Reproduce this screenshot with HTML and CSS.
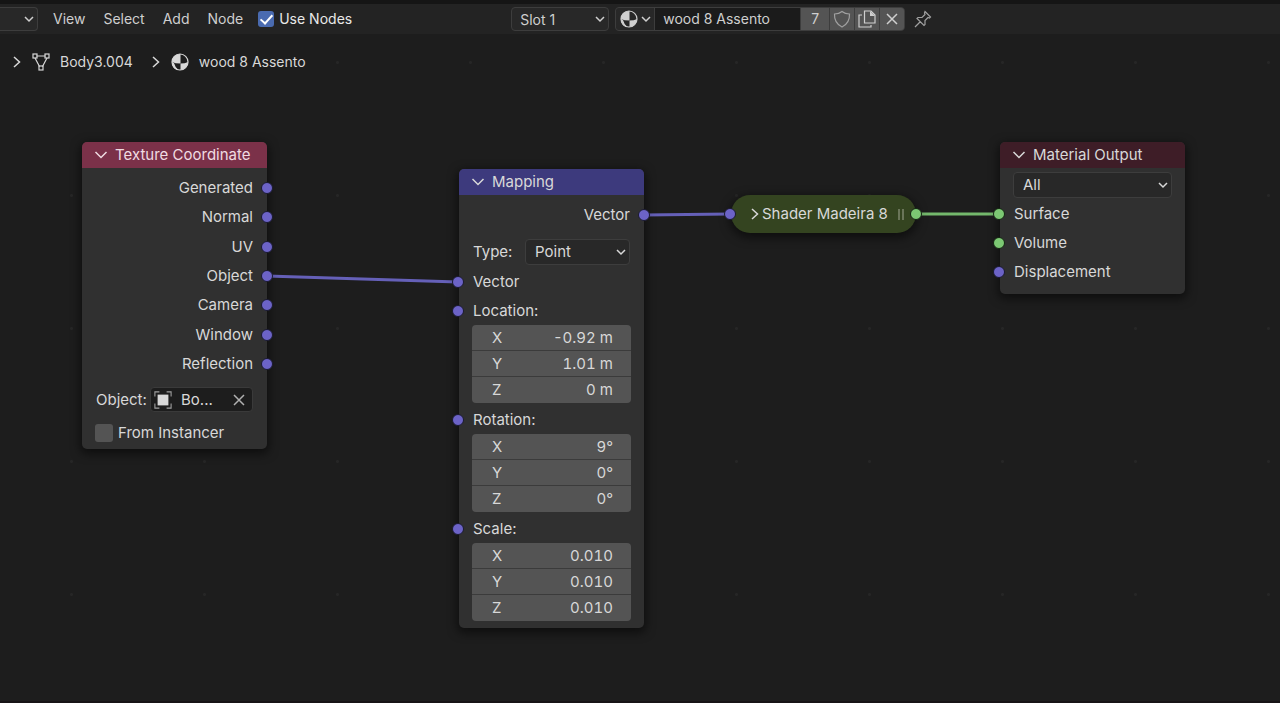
FILE: index.html
```html
<!DOCTYPE html>
<html lang="en">
<head>
  <meta charset="UTF-8">
  <meta name="viewport" content="width=device-width, initial-scale=1.0">
  <title>Shader Editor</title>
  <link rel="stylesheet" href="styles.css">
</head>
<body>
  <svg class="icon-defs" aria-hidden="true">
    <symbol id="icon-down" viewBox="0 0 10 10"><path d="M1 3l4 4 4-4"/></symbol>
    <symbol id="icon-collapse" viewBox="0 0 14 14"><path d="M1.500 4l5.500 5.500L12.500 4"/></symbol>
    <symbol id="icon-right" viewBox="0 0 14 14"><path d="M4 2l5.500 5L4 12"/></symbol>
    <symbol id="icon-close" viewBox="0 0 14 14"><path d="M2 2l10 10M12 2L2 12"/></symbol>
    <symbol id="icon-material" viewBox="0 0 18 18">
      <circle cx="9" cy="9" r="8"/>
      <path class="solid" d="M9.500 1A8 8 0 0 0 1 9q3 1.500 8.500 1.500z"/>
      <path class="solid" d="M9.500 10.500Q14 10.500 17 9a8 8 0 0 1-7.500 8z"/>
      <path class="solid" d="M1 9l2 1q1 4 4 6.500L6 17A8 8 0 0 1 1 9z"/>
    </symbol>
  </svg>

  <header class="toolbar">
    <div class="dropdown type-dropdown">
      <select aria-label="Shader type"><option></option></select>
      <svg class="arrow"><use href="#icon-down"/></svg>
    </div>
    <nav class="menu">
      <button type="button">View</button>
      <button type="button">Select</button>
      <button type="button">Add</button>
      <button type="button">Node</button>
    </nav>
    <label class="use-nodes"><input type="checkbox" class="checkbox" checked> Use Nodes</label>

    <div class="dropdown slot-dropdown">
      <select aria-label="Slot"><option>Slot 1</option></select>
      <svg class="arrow"><use href="#icon-down"/></svg>
    </div>

    <div class="datablock">
      <button type="button" class="browse" aria-label="Browse material">
        <svg class="icon material"><use href="#icon-material"/></svg>
        <svg class="arrow-small"><use href="#icon-down"/></svg>
      </button>
      <input type="text" class="name" aria-label="Material name" value="wood 8 Assento">
      <button type="button" class="tool users">7</button>
      <button type="button" class="tool" aria-label="Fake user">
        <svg class="icon dim" viewBox="0 0 18 18"><path d="M9 1.500Q12 4 16.500 4q.5 9-7.500 13Q1 13 1.500 4 6 4 9 1.500z"/></svg>
      </button>
      <button type="button" class="tool" aria-label="New material">
        <svg class="icon" viewBox="0 0 18 18"><path d="M6.500 1h6.500l4 4v8H6.500z"/><path class="solid" d="M12 1l5 5h-5z"/><path d="M4 5H1v12h12v-2"/></svg>
      </button>
      <button type="button" class="tool" aria-label="Unlink">
        <svg class="icon-mid"><use href="#icon-close"/></svg>
      </button>
    </div>
    <button type="button" class="pin" aria-label="Pin">
      <svg class="icon dim" viewBox="0 0 18 18"><path d="M11 1.500l5.500 5.500-1 1-1.500-.5-3 3v4l-1 1-7-7 1-1h4l3-3-.5-1.500zM6.500 11.500L1 17"/></svg>
    </button>
  </header>

  <main class="editor">
    <nav class="breadcrumb">
      <svg class="icon-mid"><use href="#icon-right"/></svg>
      <svg class="icon mesh" viewBox="0 0 18 18"><path d="M4.500 3h9M3 5l4.500 8.500M15 5l-4.500 8.500"/><rect x="1" y="1" width="4" height="4"/><rect x="13" y="1" width="4" height="4"/><rect x="7" y="13" width="4" height="4"/></svg>
      <span>Body3.004</span>
      <svg class="icon-mid next"><use href="#icon-right"/></svg>
      <svg class="icon material"><use href="#icon-material"/></svg>
      <span>wood 8 Assento</span>
    </nav>

    <svg class="links" aria-hidden="true">
      <path d="M267 242L458 248"/>
      <path d="M644 181L730 180"/>
      <path class="green" d="M916 180H1000"/>
    </svg>

    <section class="node texture-node">
      <h2 class="node-header"><svg class="icon-mid"><use href="#icon-collapse"/></svg>Texture Coordinate</h2>
      <ul class="sockets outputs">
        <li>Generated<i class="socket out"></i></li>
        <li>Normal<i class="socket out"></i></li>
        <li>UV<i class="socket out"></i></li>
        <li>Object<i class="socket out"></i></li>
        <li>Camera<i class="socket out"></i></li>
        <li>Window<i class="socket out"></i></li>
        <li>Reflection<i class="socket out"></i></li>
      </ul>
      <div class="object-row">
        <label for="object">Object:</label>
        <div class="object-field">
          <svg class="icon" viewBox="0 0 20 20"><path class="dim" d="M1 6V1h5M14 1h5v5M19 14v5h-5M6 19H1v-5"/><rect class="solid" x="4" y="4" width="12" height="12"/></svg>
          <input type="text" id="object" value="Bo...">
          <button type="button" aria-label="Clear object"><svg class="icon-mid"><use href="#icon-close"/></svg></button>
        </div>
      </div>
      <label class="instancer"><input type="checkbox" class="checkbox"> From Instancer</label>
    </section>

    <section class="node mapping-node">
      <h2 class="node-header"><svg class="icon-mid"><use href="#icon-collapse"/></svg>Mapping</h2>
      <div class="row output">Vector<i class="socket out"></i></div>
      <div class="type-row">
        <label for="type">Type:</label>
        <div class="dropdown">
          <select id="type"><option>Point</option></select>
          <svg class="arrow"><use href="#icon-down"/></svg>
        </div>
      </div>
      <div class="row">Vector<i class="socket in"></i></div>
      <div class="row">Location:<i class="socket in"></i></div>
      <div class="fields">
        <label>X <input type="text" value="-0.92 m"></label>
        <label>Y <input type="text" value="1.01 m"></label>
        <label>Z <input type="text" value="0 m"></label>
      </div>
      <div class="row">Rotation:<i class="socket in"></i></div>
      <div class="fields">
        <label>X <input type="text" value="9°"></label>
        <label>Y <input type="text" value="0°"></label>
        <label>Z <input type="text" value="0°"></label>
      </div>
      <div class="row">Scale:<i class="socket in"></i></div>
      <div class="fields">
        <label>X <input type="text" value="0.010"></label>
        <label>Y <input type="text" value="0.010"></label>
        <label>Z <input type="text" value="0.010"></label>
      </div>
    </section>

    <section class="node group-node">
      <svg class="icon-mid"><use href="#icon-right"/></svg>
      <h2>Shader Madeira 8</h2>
      <span class="grip"></span>
      <i class="socket in"></i>
      <i class="socket out green"></i>
    </section>

    <section class="node output-node">
      <h2 class="node-header"><svg class="icon-mid"><use href="#icon-collapse"/></svg>Material Output</h2>
      <div class="dropdown">
        <select aria-label="Target"><option>All</option></select>
        <svg class="arrow"><use href="#icon-down"/></svg>
      </div>
      <ul class="sockets">
        <li>Surface<i class="socket in green"></i></li>
        <li>Volume<i class="socket in green"></i></li>
        <li>Displacement<i class="socket in"></i></li>
      </ul>
    </section>
  </main>
</body>
</html>
```
FILE: styles.css
```css
* {
  box-sizing: border-box;
}

body {
  display: flex;
  flex-direction: column;
  min-height: 100vh;
  margin: 0;
  background-color: #1d1d1d;
  color: #d8d8d8;
  font-family: Inter, sans-serif;
  font-size: 14px;
  line-height: 24px;
}

button,
input,
select {
  margin: 0;
  padding: 0;
  border: none;
  background: none;
  color: inherit;
  font: inherit;
}

h2,
ul {
  margin: 0;
  padding: 0;
  font-size: inherit;
  font-weight: 400;
  list-style: none;
}

svg {
  flex: none;
  fill: none;
  stroke: currentColor;
  stroke-width: 1.5;
}

.icon-defs {
  position: absolute;
  width: 0;
  height: 0;
}

.solid {
  fill: currentColor;
  stroke: none;
}

.icon {
  width: 18px;
  height: 18px;
  stroke-width: 1.2;
}

.icon-mid {
  width: 14px;
  height: 14px;
}

.dim {
  color: #a0a0a0;
}

/* toolbar */
.toolbar {
  display: flex;
  align-items: center;
  height: 34px;
  border-top: 4px solid #151515;
  background-color: #232323;
  color: #cfcfcf;
}

.dropdown {
  display: grid;
  align-items: center;
}

.dropdown select,
.dropdown .arrow {
  grid-area: 1 / 1;
}

.dropdown select {
  width: 100%;
  height: 26px;
  padding: 0 9px;
  border: 1px solid #3d3d3d;
  border-radius: 4px;
  background-color: #282828;
  appearance: none;
}

.dropdown .arrow {
  justify-self: end;
  width: 10px;
  height: 10px;
  margin-right: 4px;
  pointer-events: none;
}

.toolbar .dropdown select {
  height: 24px;
  padding: 0 8px;
}

.type-dropdown {
  width: 38px;
}

.type-dropdown select {
  border-left: none;
  border-radius: 0 4px 4px 0;
}

.menu {
  display: flex;
  gap: 18px;
  margin-left: 15px;
}

.use-nodes,
.instancer {
  display: flex;
  align-items: center;
  gap: 5px;
}

.use-nodes {
  margin-left: 15px;
  color: #e8e8e8;
}

.checkbox {
  display: grid;
  place-items: center;
  flex: none;
  width: 16px;
  height: 16px;
  border-radius: 3px;
  background-color: #545454;
  appearance: none;
}

.checkbox:checked {
  background-color: #4a6bb0;
}

.checkbox:checked::after {
  content: "";
  width: 5px;
  height: 10px;
  margin-bottom: 3px;
  border: solid #fff;
  border-width: 0 2px 2px 0;
  transform: rotate(42deg);
}

.slot-dropdown {
  width: 98px;
  margin-left: 159px;
}

.datablock {
  display: flex;
  gap: 1px;
  width: 290px;
  height: 24px;
  margin-left: 6px;
  border: 1px solid #3d3d3d;
  border-radius: 4px;
  background-color: #3d3d3d;
  overflow: hidden;
}

.browse {
  display: flex;
  align-items: center;
  gap: 3px;
  width: 38px;
  padding-left: 4px;
  background-color: #282828;
}

.arrow-small {
  width: 10px;
  height: 10px;
}

.datablock .name {
  flex: 1;
  min-width: 0;
  padding-left: 8px;
  background-color: #1b1b1b;
}

.tool {
  display: flex;
  align-items: center;
  justify-content: center;
  width: 24px;
  background-color: #545454;
}

.users {
  width: 28px;
}

.pin {
  display: flex;
  margin-left: 9px;
}

/* node canvas */
.editor {
  position: relative;
  flex: 1;
  overflow: hidden;
  border-bottom: 2px solid #171416;
  background-image: radial-gradient(circle, #262626 1px, transparent 2px);
  background-size: 133px 133px;
  background-position: 5px 95px;
}

.breadcrumb {
  display: flex;
  align-items: center;
  gap: 10px;
  padding: 16px 10px;
}

.breadcrumb .mesh {
  margin-left: -2px;
}

.breadcrumb .next {
  margin-left: 6px;
}

.breadcrumb .material {
  margin-left: -2px;
}

.links {
  position: absolute;
  top: 0;
  left: 0;
  width: 100%;
  height: 100%;
  stroke: #6560b8;
  stroke-width: 3;
}

.links .green {
  stroke: #74b86c;
}

.node {
  position: absolute;
  display: flex;
  flex-direction: column;
  width: 185px;
  border-radius: 5px;
  background-color: #303030;
  box-shadow: 0 3px 10px 2px rgba(0, 0, 0, 0.5);
  font-size: 15px;
}

.node-header {
  display: flex;
  align-items: center;
  gap: 7px;
  height: 26px;
  padding-left: 12px;
  border-radius: 5px 5px 0 0;
}

.sockets {
  display: flex;
  flex-direction: column;
  justify-content: space-between;
}

.sockets li,
.row {
  position: relative;
  height: 24px;
  padding: 0 14px;
}

.outputs,
.output {
  text-align: right;
}

.socket {
  position: absolute;
  top: 6px;
  width: 12px;
  height: 12px;
  border: 1px solid #1a1a30;
  border-radius: 50%;
  background-color: #6c63c7;
}

.socket.in {
  left: -7px;
}

.socket.out {
  right: -6px;
}

.socket.green {
  border-color: #142412;
  background-color: #7cc873;
}

.texture-node {
  top: 108px;
  left: 82px;
  padding-bottom: 4px;
}

.texture-node .node-header {
  background-color: #7b3149;
  color: #f0dce2;
}

.texture-node .sockets {
  height: 200px;
  margin-top: 8px;
}

.object-row {
  display: flex;
  justify-content: space-between;
  align-items: center;
  margin-top: 11px;
  padding: 0 14px;
}

.object-field {
  display: flex;
  align-items: center;
  width: 103px;
  height: 25px;
  padding: 0 6px 0 3px;
  border: 1px solid #3a3a3a;
  border-radius: 4px;
  background-color: #1d1d1d;
}

.object-field input {
  flex: 1;
  min-width: 0;
  padding-left: 9px;
}

.object-field button {
  display: flex;
  color: #b0b0b0;
}

.instancer {
  height: 24px;
  margin-top: 9px;
  padding-left: 13px;
}

.instancer .checkbox {
  width: 18px;
  height: 18px;
}

.mapping-node {
  top: 135px;
  left: 459px;
  padding-bottom: 7px;
}

.mapping-node .node-header {
  margin-bottom: 8px;
  background-color: #3d3a7d;
}

.type-row {
  display: flex;
  justify-content: space-between;
  align-items: center;
  margin-top: 12px;
  padding: 0 14px;
}

.type-row .dropdown {
  width: 105px;
}

.mapping-node .row ~ .row {
  margin-top: 5px;
}

.fields {
  margin: 2px 13px 0;
  border-radius: 4px;
  background-color: #545454;
  overflow: hidden;
}

.fields label {
  display: flex;
  align-items: center;
  height: 26px;
  padding: 0 18px 0 20px;
  border-bottom: 1px solid #3b3b3b;
}

.fields label:last-child {
  border-bottom: none;
}

.fields input {
  flex: 1;
  min-width: 0;
  font-variant-numeric: tabular-nums;
  text-align: right;
}

.group-node {
  top: 161px;
  left: 731px;
  flex-direction: row;
  align-items: center;
  height: 38px;
  padding-left: 17px;
  border-radius: 19px;
  background-color: #344420;
}

.group-node .socket {
  top: 13px;
}

.grip {
  width: 6px;
  height: 11px;
  margin: 0 12px 0 auto;
  border: solid #6a7559;
  border-width: 0 2px;
}

.output-node {
  top: 108px;
  left: 1000px;
  padding-bottom: 10px;
}

.output-node .node-header {
  background-color: #3e1d27;
}

.output-node .dropdown {
  margin: 4px 13px;
}

.output-node .sockets {
  height: 82px;
}
```
